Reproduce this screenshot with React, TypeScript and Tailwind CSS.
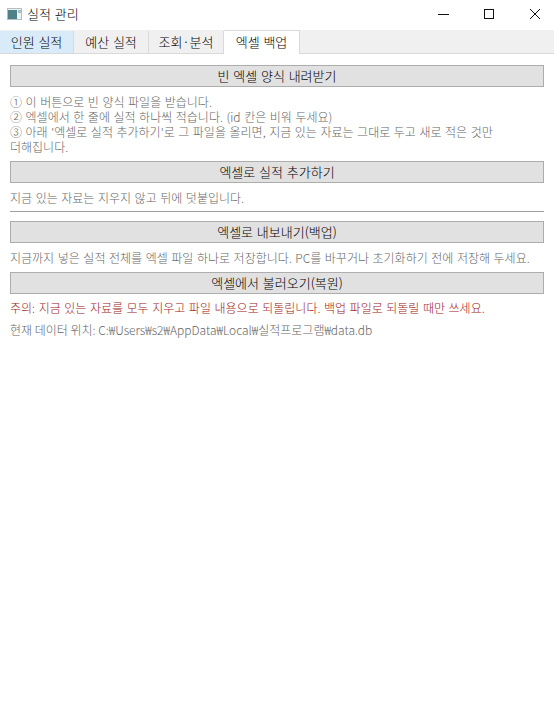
const TABS = ['인원 실적', '예산 실적', '조회·분석'];

const ActionButton = ({ label }: { label: string }) => (
  <button className="flex h-[22px] w-full items-center justify-center border border-[#adadad] bg-[#e1e1e1] text-[13px] font-light text-black [word-spacing:0.9px]">
    {label}
  </button>
);

const App = () => {
  return (
    <div className="flex h-[724px] w-[554px] flex-col overflow-hidden bg-white font-['Noto_Sans_CJK_KR','Noto_Sans',sans-serif] text-[12px] font-light [word-spacing:0.9px]">
      {/* 타이틀 바 */}
      <div className="flex h-[30px] shrink-0 items-center pb-[2px] pl-[7px]">
        <svg width="15" height="12" viewBox="0 0 15 12" className="mr-[5px]">
          <rect x="0.5" y="0.5" width="14" height="11" fill="#eef1f2" stroke="#b4bec2" strokeWidth="1" />
          <rect x="1" y="2" width="9" height="9" fill="#4f8087" />
          <rect x="11" y="2" width="3" height="3" fill="#a9bcc1" />
        </svg>
        <span className="text-[13px] text-black">실적 관리</span>
        <div className="ml-auto mr-[-3px] flex h-full">
          <div className="flex w-[45px] items-center justify-center">
            <svg width="11" height="10" viewBox="0 0 11 10">
              <path d="M0 5.5H11" stroke="#111" strokeWidth="1" />
            </svg>
          </div>
          <div className="flex w-[46px] items-center justify-center">
            <svg width="10" height="10" viewBox="0 0 10 10">
              <rect x="0.5" y="0.5" width="9" height="9" fill="none" stroke="#111" strokeWidth="1" />
            </svg>
          </div>
          <div className="flex w-[45px] items-center justify-center">
            <svg width="10" height="10" viewBox="0 0 10 10">
              <path d="M0 0L10 10M10 0L0 10" stroke="#111" strokeWidth="1" />
            </svg>
          </div>
        </div>
      </div>

      {/* 탭 */}
      <div className="flex h-[24px] shrink-0 items-end border-b border-[#d9d9d9] bg-[#f0f0f0] text-[13px]">
        {TABS.map((tab, i) => (
          <div
            key={tab}
            className={
              i === 0
                ? 'flex h-[22px] w-[74px] items-center justify-center border-r border-[#d9d9d9] bg-[#d9ebf9] text-black'
                : 'flex h-[22px] w-[75px] items-center justify-center border-r border-[#d9d9d9] text-black'
            }
          >
            {tab}
          </div>
        ))}
        <div className="mb-[-1px] flex h-[24px] w-[76px] items-center justify-center border border-b-0 border-l-0 border-[#d9d9d9] bg-white pb-[2px] text-black">
          엑셀 백업
        </div>
      </div>

      {/* 내용 */}
      <div className="flex flex-col px-[10px] pt-[11px] text-[#666]">
        <ActionButton label="빈 엑셀 양식 내려받기" />
        <p className="mt-[7px] leading-[15px]">
          ① 이 버튼으로 빈 양식 파일을 받습니다.
          <br />
          ② 엑셀에서 한 줄에 실적 하나씩 적습니다. (id 칸은 비워 두세요)
          <br />
          ③ 아래 '엑셀로 실적 추가하기'로 그 파일을 올리면, 지금 있는 자료는 그대로 두고 새로 적은 것만
          <br />
          더해집니다.
        </p>
        <div className="mt-[7px]">
          <ActionButton label="엑셀로 실적 추가하기" />
        </div>
        <p className="mt-[7px] leading-[15px]">지금 있는 자료는 지우지 않고 뒤에 덧붙입니다.</p>
        <div className="mt-[6px] h-px bg-[#a0a0a0]" />
        <div className="mt-[9px]">
          <ActionButton label="엑셀로 내보내기(백업)" />
        </div>
        <p className="mt-[7px] leading-[15px]">
          지금까지 넣은 실적 전체를 엑셀 파일 하나로 저장합니다. PC를 바꾸거나 초기화하기 전에 저장해 두세요.
        </p>
        <div className="mt-[7px]">
          <ActionButton label="엑셀에서 불러오기(복원)" />
        </div>
        <p className="mt-[6px] leading-[15px] text-[#a02020]">
          주의: 지금 있는 자료를 모두 지우고 파일 내용으로 되돌립니다. 백업 파일로 되돌릴 때만 쓰세요.
        </p>
        <p className="mt-[7px] leading-[15px] [word-spacing:0px]">현재 데이터 위치: C:₩Users₩s2₩AppData₩Local₩실적프로그램₩data.db</p>
      </div>
    </div>
  );
};

export default App;
